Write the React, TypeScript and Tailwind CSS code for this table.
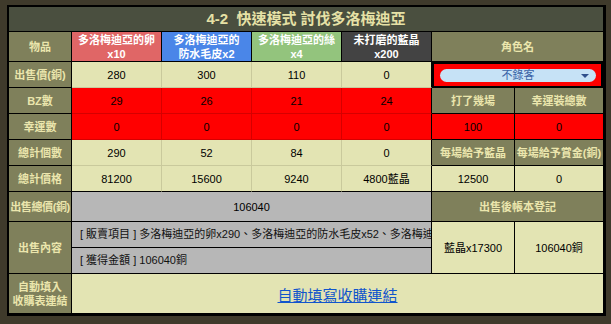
import React from 'react'

// spreadsheet-like dashboard for 4-2 快速模式
const olive = 'bg-[#7f805b] text-[#ebe6ad] font-bold'
const cream = 'bg-[#e3e4b3] text-black border-r border-b border-[#c9c99c]'
const red = 'bg-[#ff0000] text-black border-r border-b border-[#d50000]'
const blk = 'border-r border-b border-black'

function Cell({ className = '', children }: { className?: string; children?: React.ReactNode }) {
    return (
        <div className={`flex items-center justify-center text-center leading-[14px] overflow-hidden ${className}`}>
            {children}
        </div>
    )
}

const prices = ['280', '300', '110', '0']
const bz = ['29', '26', '21', '24']
const counts = ['290', '52', '84', '0']
const totals = ['81200', '15600', '9240', '4800藍晶']

export default function App() {
    return (
        <div className="w-[611px] h-[324px] bg-[#3f3a2b] pt-[5px] pl-[7px] font-['Liberation_Sans','Noto_Sans_CJK_TC',sans-serif] text-[11px]">
            <div className="w-[599px] border-l-2 border-t-2 border-r-[3px] border-b-[3px] border-black grid grid-cols-[63px_90px_90px_90px_90px_83px_88px] grid-rows-[25px_30px_26px_26px_26px_26px_26px_30px_26px_26px_39px]">
                {/* title */}
                <Cell className="col-span-7 bg-[#4a4f3f] text-[#e6e1a6] font-bold text-[15px] whitespace-pre border-b border-black">
                    4-2  快速模式 討伐多洛梅迪亞
                </Cell>

                {/* header */}
                <Cell className={`${olive} ${blk}`}>物品</Cell>
                <Cell className={`bg-[#e06666] text-white font-bold ${blk}`}>多洛梅迪亞的卵<br />x10</Cell>
                <Cell className={`bg-[#4a86e8] text-white font-bold ${blk}`}>多洛梅迪亞的<br />防水毛皮x2</Cell>
                <Cell className={`bg-[#93c47d] text-white font-bold ${blk}`}>多洛梅迪亞的絲<br />x4</Cell>
                <Cell className={`bg-[#434343] text-white font-bold ${blk}`}>未打磨的藍晶<br />x200</Cell>
                <Cell className={`col-span-2 ${olive} border-b border-black`}>角色名</Cell>

                {/* 出售價 */}
                <Cell className={`${olive} ${blk}`}>出售價(銅)</Cell>
                {prices.map((p, i) => (
                    <Cell key={i} className={i === 3 ? `${cream} border-r-black` : cream}>{p}</Cell>
                ))}
                <div className="col-span-2 bg-[#ff0000] border-2 border-black flex items-center">
                    <div className="relative w-full mx-[6px] mr-[5px] h-[13px] rounded-full bg-[#c6e2f6] flex items-center justify-center text-[#3a62a6] text-[11px] leading-none">
                        不錄客
                        <span className="absolute right-[7px] top-[5px] w-0 h-0 border-l-[4px] border-r-[4px] border-t-[4px] border-l-transparent border-r-transparent border-t-[#2f4f8c]" />
                    </div>
                </div>

                {/* BZ */}
                <Cell className={`${olive} ${blk}`}>BZ數</Cell>
                {bz.map((p, i) => (
                    <Cell key={i} className={i === 3 ? `${red} border-r-black` : red}>{p}</Cell>
                ))}
                <Cell className={`${olive} ${blk}`}>打了幾場</Cell>
                <Cell className={`${olive} border-b border-black`}>幸運裝總數</Cell>

                {/* 幸運數 */}
                <Cell className={`${olive} ${blk}`}>幸運數</Cell>
                {[0, 1, 2, 3].map((i) => (
                    <Cell key={i} className={i === 3 ? `${red} border-r-black` : red}>0</Cell>
                ))}
                <Cell className={`bg-[#ff0000] ${blk}`}>100</Cell>
                <Cell className="bg-[#ff0000] border-b border-black">0</Cell>

                {/* 總計個數 */}
                <Cell className={`${olive} ${blk}`}>總計個數</Cell>
                {counts.map((p, i) => (
                    <Cell key={i} className={i === 3 ? `${cream} border-r-black` : cream}>{p}</Cell>
                ))}
                <Cell className={`${olive} ${blk}`}>每場給予藍晶</Cell>
                <Cell className={`${olive} border-b border-black whitespace-nowrap`}>每場給予賞金(銅)</Cell>

                {/* 總計價格 */}
                <Cell className={`${olive} ${blk}`}>總計價格</Cell>
                {totals.map((p, i) => (
                    <Cell key={i} className={i === 3 ? `bg-[#e3e4b3] ${blk}` : `${cream} border-b-black`}>{p}</Cell>
                ))}
                <Cell className={`bg-[#e3e4b3] ${blk}`}>12500</Cell>
                <Cell className="bg-[#e3e4b3] border-b border-black">0</Cell>

                {/* 出售總價 */}
                <Cell className={`${olive} ${blk} whitespace-nowrap tracking-[-0.4px]`}>出售總價(銅)</Cell>
                <Cell className={`col-span-4 bg-[#b7b7b7] ${blk}`}>106040</Cell>
                <Cell className={`col-span-2 ${olive} border-b border-black`}>出售後帳本登記</Cell>

                {/* 出售內容 */}
                <Cell className={`row-span-2 ${olive} ${blk}`}>出售內容</Cell>
                <div className={`col-span-4 bg-[#b7b7b7] ${blk} flex items-center pl-2 whitespace-nowrap overflow-hidden text-[#111]`}>
                    [ 販賣項目 ] 多洛梅迪亞的卵x290、多洛梅迪亞的防水毛皮x52、多洛梅迪亞的絲x84
                </div>
                <Cell className={`row-span-2 bg-[#e3e4b3] ${blk}`}>藍晶x17300</Cell>
                <Cell className="row-span-2 bg-[#e3e4b3] border-b border-black">106040銅</Cell>
                <div className={`col-span-4 bg-[#b7b7b7] ${blk} flex items-center pl-2 whitespace-nowrap overflow-hidden text-[#111]`}>
                    [ 獲得金額 ] 106040銅
                </div>

                {/* 自動填入 */}
                <Cell className={`${olive} border-r border-black`}>自動填入<br />收購表連結</Cell>
                <Cell className="col-span-6 bg-[#e3e4b3] pt-[3px]">
                    <a href="#" className="text-[15px] text-[#1155cc] underline leading-none">自動填寫收購連結</a>
                </Cell>
            </div>
        </div>
    )
}
